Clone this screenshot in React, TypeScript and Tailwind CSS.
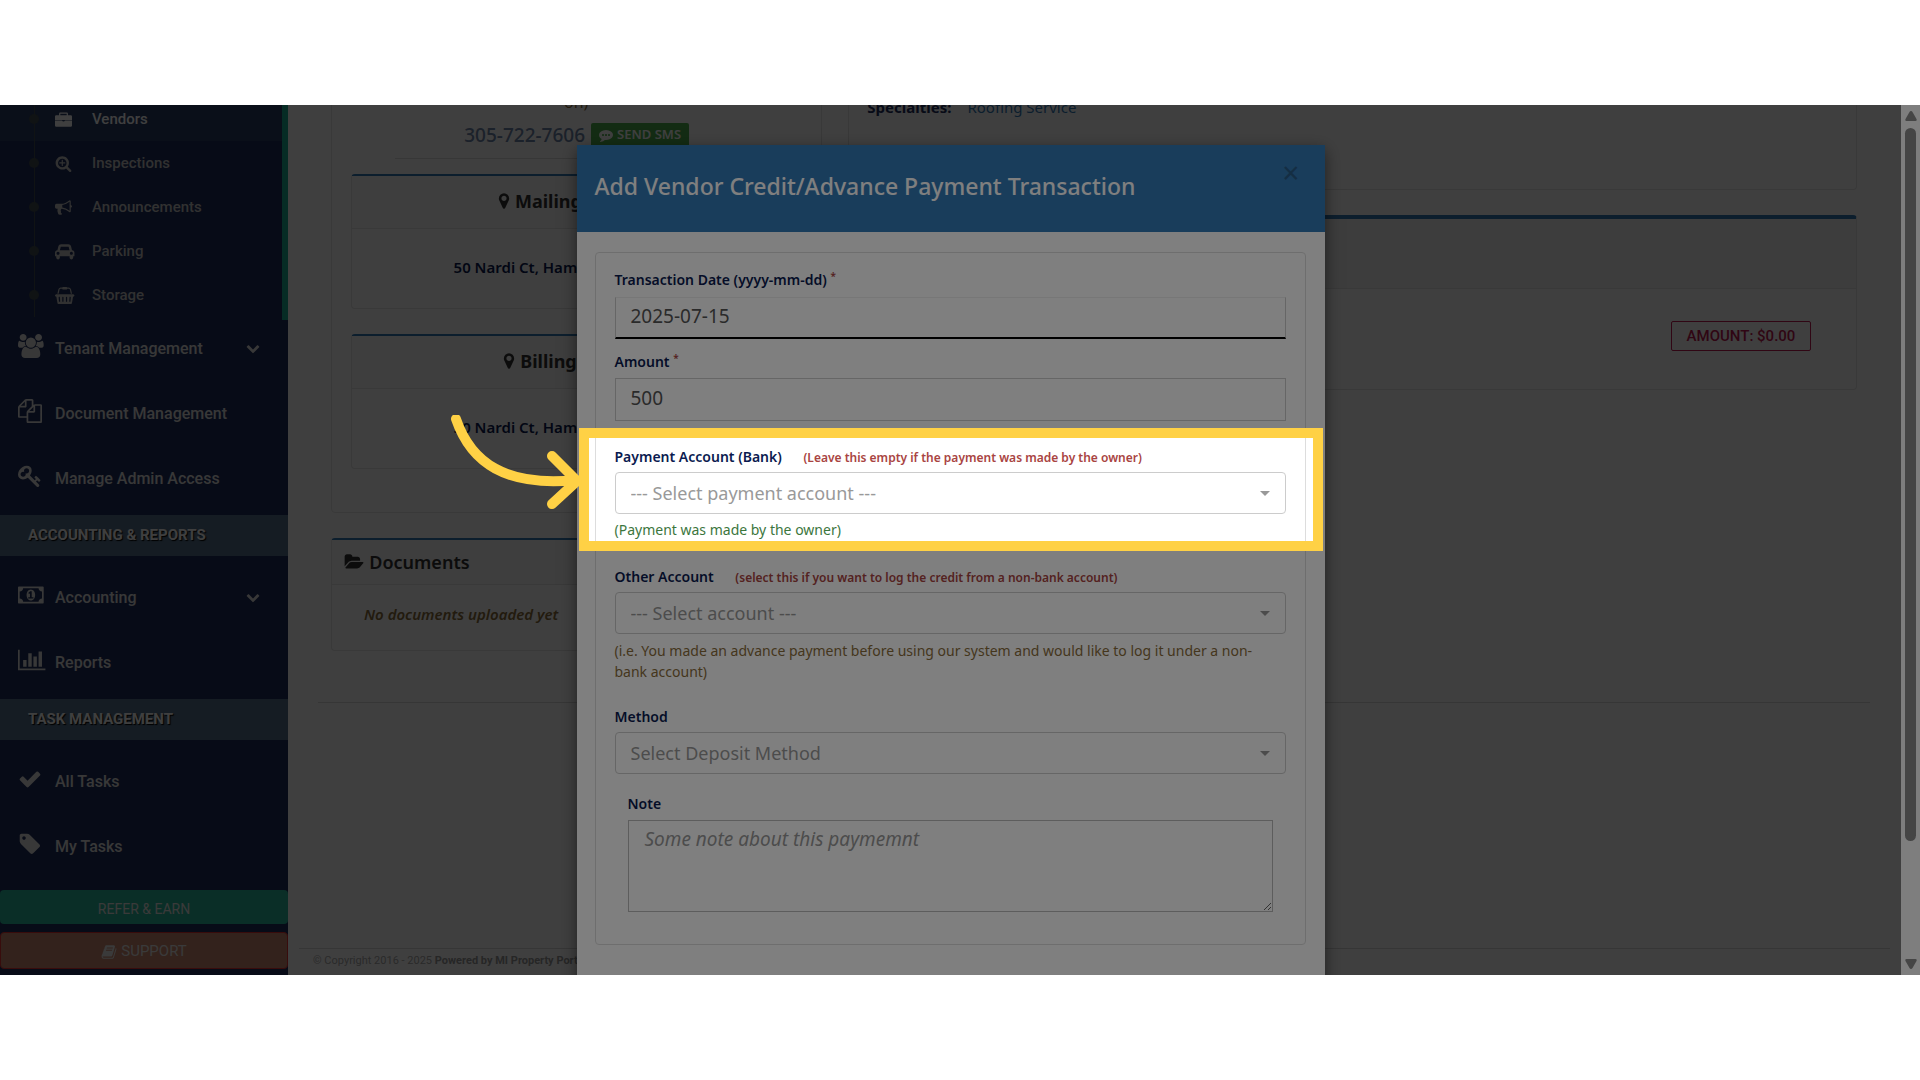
import type { ReactNode } from "react";

type Glyph = { w: number; d: string };

const glyphs = {
  briefcase: {
    w: 1792,
    d: "M0 576q0-128 128-128h304v-192q0-96 96-96h736q96 0 96 96v192h304q128 0 128 128v368h-1792zM560 288v160h672v-160zM0 1010h752q0 96 144 96t144-96h752v526q0 128-128 128h-1536q-128 0-128-128z",
  },
  searchPlus: {
    w: 1792,
    d: "M1088 800v64q0 13-9.5 22.5t-22.5 9.5h-224v224q0 13-9.5 22.5t-22.5 9.5h-64q-13 0-22.5-9.5t-9.5-22.5v-224h-224q-13 0-22.5-9.5t-9.5-22.5v-64q0-13 9.5-22.5t22.5-9.5h224v-224q0-13 9.5-22.5t22.5-9.5h64q13 0 22.5 9.5t9.5 22.5v224h224q13 0 22.5 9.5t9.5 22.5zm128 32q0-185-131.5-316.5t-316.5-131.5-316.5 131.5-131.5 316.5 131.5 316.5 316.5 131.5 316.5-131.5 131.5-316.5zm512 832q0 53-37.5 90.5t-90.5 37.5q-54 0-90-38l-343-342q-179 124-399 124-143 0-273.5-55.5t-225-150-150-225-55.5-273.5 55.5-273.5 150-225 225-150 273.5-55.5 273.5 55.5 225 150 150 225 55.5 273.5q0 220-124 399l343 343q37 37 37 90z",
  },
  bullhorn: {
    w: 1792,
    d: "M1664 640q53 0 90.5 37.5t37.5 90.5-37.5 90.5-90.5 37.5v384q0 52-38 90t-90 38q-417-347-812-380-58 19-91 66t-31 100.5 40 92.5q-20 33-23 65.5t6 58 33.5 55 48 50 61.5 50.5q-29 58-111.5 83t-168.5 11.5-132-55.5q-7-23-29.5-87.5t-32-94.5-23-89-15-101 3.5-98.5 22-110.5h-122q-66 0-113-47t-47-113v-192q0-66 47-113t113-47h480q435 0 896-384 52 0 90 38t38 90v384zm-128 604v-954q-394 302-768 343v270q377 42 768 341z",
  },
  car: {
    w: 2048,
    d: "M480 1088q0-66-47-113t-113-47-113 47-47 113 47 113 113 47 113-47 47-113zm36-320h1016l-89-357q-2-8-14-17.5t-21-9.5h-768q-9 0-21 9.5t-14 17.5zm1372 320q0-66-47-113t-113-47-113 47-47 113 47 113 113 47 113-47 47-113zm160-96v384q0 14-9 23t-23 9h-96v128q0 80-56 136t-136 56-136-56-56-136v-128h-1024v128q0 80-56 136t-136 56-136-56-56-136v-128h-96q-14 0-23-9t-9-23v-384q0-93 65.5-158.5t158.5-65.5h28l105-419q23-94 104-157.5t179-63.5h768q98 0 179 63.5t104 157.5l105 419h28q93 0 158.5 65.5t65.5 158.5z",
  },
  basket: {
    w: 2048,
    d: "M1920 768q53 0 90.5 37.5t37.5 90.5-37.5 90.5-90.5 37.5h-15l-115 662q-8 46-44 76t-82 30h-1280q-46 0-82-30t-44-76l-115-662h-15q-53 0-90.5-37.5t-37.5-90.5 37.5-90.5 90.5-37.5h1792zm-1435 800q26-2 43.5-22.5t15.5-46.5l-32-416q-2-26-22.5-43.5t-46.5-15.5-43.5 22.5-15.5 46.5l32 416q2 25 20.5 42t43.5 17h5zm411-64v-416q0-26-19-45t-45-19-45 19-19 45v416q0 26 19 45t45 19 45-19 19-45zm384 0v-416q0-26-19-45t-45-19-45 19-19 45v416q0 26 19 45t45 19 45-19 19-45zm352 5l32-416q2-26-15.5-46.5t-43.5-22.5-46.5 15.5-22.5 43.5l-32 416q-2 26 15.5 46.5t43.5 22.5h5q25 0 43.5-17t20.5-42zm-1156-1217l-93 412h-132l101-441q19-88 89-143.5t160-55.5h167q0-26 19-45t45-19h384q26 0 45 19t19 45h167q90 0 160 55.5t89 143.5l101 441h-132l-93-412q-11-44-45.5-72t-79.5-28h-167q0 26-19 45t-45 19h-384q-26 0-45-19t-19-45h-167q-45 0-79.5 28t-45.5 72z",
  },
  users: {
    w: 1920,
    d: "M593 896q-162 5-265 128h-134q-82 0-138-40.5t-56-118.5q0-353 124-353 6 0 43.5 21t97.5 42.5 119 21.5q67 0 133-23-5 37-5 66 0 139 81 256zm1071 637q0 120-73 189.5t-194 69.5h-874q-121 0-194-69.5t-73-189.5q0-53 3.5-103.5t14-109 26.5-108.5 43-97.5 62-81 85.5-53.5 111.5-20q10 0 43 21.5t73 48 107 48 135 21.5 135-21.5 107-48 73-48 43-21.5q61 0 111.5 20t85.5 53.5 62 81 43 97.5 26.5 108.5 14 109 3.5 103.5zm-1024-1277q0 106-75 181t-181 75-181-75-75-181 75-181 181-75 181 75 75 181zm704 384q0 159-112.5 271.5t-271.5 112.5-271.5-112.5-112.5-271.5 112.5-271.5 271.5-112.5 271.5 112.5 112.5 271.5zm576 225q0 78-56 118.5t-138 40.5h-134q-103-123-265-128 81-117 81-256 0-29-5-66 66 23 133 23 59 0 119-21.5t97.5-42.5 43.5-21q124 0 124 353zm-128-609q0 106-75 181t-181 75-181-75-75-181 75-181 181-75 181 75 75 181z",
  },
  files: {
    w: 1792,
    d: "M1696 384q40 0 68 28t28 68v1216q0 40-28 68t-68 28h-960q-40 0-68-28t-28-68v-288h-544q-40 0-68-28t-28-68v-672q0-40 20-88t48-76l408-408q28-28 76-48t88-20h416q40 0 68 28t28 68v328q68-40 128-40h416zm-544 213l-299 299h299v-299zm-640-384l-299 299h299v-299zm196 647l316-316v-416h-384v416q0 40-28 68t-68 28h-416v640h512v-256q0-40 20-88t48-76zm956 804v-1152h-384v416q0 40-28 68t-68 28h-416v640h896z",
  },
  key: {
    w: 1792,
    d: "M832 512q0-80-56-136t-136-56-136 56-56 136q0 42 19 83-41-19-83-19-80 0-136 56t-56 136 56 136 136 56 136-56 56-136q0-42-19-83 41 19 83 19 80 0 136-56t56-136zm851 704q0 17-49 66t-66 49q-9 0-28.5-16t-36.5-33-38.5-40-24.5-26l-96 96 220 220q28 28 28 68 0 42-39 81t-81 39q-40 0-68-28l-671-671q-176 131-365 131-163 0-265.5-102.5t-102.5-265.5q0-160 95-313t248-248 313-95q163 0 265.5 102.5t102.5 265.5q0 189-131 365l355 355 96-96q-3-3-26-24.5t-40-38.5-33-36.5-16-28.5q0-17 49-66t66-49q13 0 23 10 6 6 46 44.5t82 79.5 86.5 86 73 78 28.5 41z",
  },
  money: {
    w: 1920,
    d: "M768 1152h384v-96h-128v-448h-114l-148 137 77 80q42-37 55-57h2v288h-128v96zm512-256q0 70-21 142t-59.5 134-101.5 101-138 39-138-39-101.5-101-59.5-134-21-142 21-142 59.5-134 101.5-101 138-39 138 39 101.5 101 59.5 134 21 142zm512 256v-512q-106 0-181-75t-75-181h-1152q0 106-75 181t-181 75v512q106 0 181 75t75 181h1152q0-106 75-181t181-75zm128-832v1152q0 26-19 45t-45 19h-1792q-26 0-45-19t-19-45v-1152q0-26 19-45t45-19h1792q26 0 45 19t19 45z",
  },
  chart: {
    w: 2048,
    d: "M640 896v512h-256v-512h256zm384-512v1024h-256v-1024h256zm1024 1152v128h-2048v-1536h128v1408h1920zm-640-896v768h-256v-768h256zm384-384v1152h-256v-1152h256z",
  },
  check: {
    w: 1792,
    d: "M1671 566q0 40-28 68l-724 724-136 136q-28 28-68 28t-68-28l-136-136-362-362q-28-28-28-68t28-68l136-136q28-28 68-28t68 28l294 295 656-657q28-28 68-28t68 28l136 136q28 28 28 68z",
  },
  tag: {
    w: 1792,
    d: "M576 448q0-53-37.5-90.5t-90.5-37.5-90.5 37.5-37.5 90.5 37.5 90.5 90.5 37.5 90.5-37.5 37.5-90.5zm1067 576q0 53-37 90l-491 492q-39 37-91 37-53 0-90-37l-715-716q-38-37-64.5-101t-26.5-117v-416q0-52 38-90t90-38h416q53 0 117 26.5t102 64.5l715 714q37 39 37 91z",
  },
  book: {
    w: 1792,
    d: "M1703 478q40 57 18 129l-275 906q-19 64-76.5 107.5t-122.5 43.5h-923q-77 0-148.5-53.5t-99.5-131.5q-24-67-2-127 0-4 3-27t4-37q1-8-3-21.5t-3-19.5q2-11 8-21t16.5-23.5 16.5-23.5q23-38 45-91.5t30-91.5q3-10 .5-30t-.5-28q3-11 17-28t17-23q21-36 42-92t25-90q1-9-2.5-32t.5-28q4-13 22-30.5t22-22.5q19-26 42.5-84.5t27.5-96.5q1-8-3-25.5t-2-26.5q2-8 9-18t18-23 17-21q8-12 16.5-30.5t15-35 16-36 19.5-32 26.5-23.5 36-11.5 47.5 5.5l-1 3q38-9 51-9h761q74 0 114 56t18 130l-274 906q-36 119-71.5 153.5t-128.5 34.5h-869q-27 0-38 15-11 16-1 43 24 70 144 70h923q29 0 56-15.5t35-41.5l300-987q7-22 5-57 38 15 59 43zm-1064 2q-4 13 2 22.5t20 9.5h608q13 0 25.5-9.5t16.5-22.5l21-64q4-13-2-22.5t-20-9.5h-608q-13 0-25.5 9.5t-16.5 22.5zm-83 256q-4 13 2 22.5t20 9.5h608q13 0 25.5-9.5t16.5-22.5l21-64q4-13-2-22.5t-20-9.5h-608q-13 0-25.5 9.5t-16.5 22.5z",
  },
  comment: {
    w: 1792,
    d: "M640 896q0-53-37.5-90.5t-90.5-37.5-90.5 37.5-37.5 90.5 37.5 90.5 90.5 37.5 90.5-37.5 37.5-90.5zm384 0q0-53-37.5-90.5t-90.5-37.5-90.5 37.5-37.5 90.5 37.5 90.5 90.5 37.5 90.5-37.5 37.5-90.5zm384 0q0-53-37.5-90.5t-90.5-37.5-90.5 37.5-37.5 90.5 37.5 90.5 90.5 37.5 90.5-37.5 37.5-90.5zm384 0q0 174-120 321.5t-326 233-450 85.5q-70 0-145-8-198 175-460 242-49 14-114 22-17 2-30.5-9t-17.5-29v-1q-3-4-.5-12t2-10 4.5-9.5l6-9 7-8.5 8-9q7-8 31-34.5t34.5-38 31-39.5 32.5-51 27-59 26-76q-157-89-247.5-220t-90.5-281q0-130 71-248.5t191-204.5 286-136.5 348-50.5 348 50.5 286 136.5 191 204.5 71 248.5z",
  },
  marker: {
    w: 1792,
    d: "M1152 640q0-106-75-181t-181-75-181 75-75 181 75 181 181 75 181-75 75-181zm256 0q0 109-33 179l-364 774q-16 33-47.5 52t-67.5 19-67.5-19-46.5-52l-365-774q-33-70-33-179 0-212 150-362t362-150 362 150 150 362z",
  },
  folder: {
    w: 1920,
    d: "M1943 952q0 31-31 66l-336 396q-43 51-120.5 86.5t-143.5 35.5h-1088q-34 0-60.5-13t-26.5-43q0-31 31-66l336-396q43-51 120.5-86.5t143.5-35.5h1088q34 0 60.5 13t26.5 43zm-343-344v160h-832q-94 0-197 47.5t-164 119.5l-337 396-5 6q0-4-.5-12.5t-.5-12.5v-960q0-92 66-158t158-66h320q92 0 158 66t66 158v32h544q92 0 158 66t66 158z",
  },
  chevron: {
    w: 1792,
    d: "M1683 808l-742 741q-19 19-45 19t-45-19l-742-741q-19-19-19-45.5t19-45.5l166-165q19-19 45-19t45 19l531 531 531-531q19-19 45-19t45 19l166 165q19 19 19 45.5t-19 45.5z",
  },
} satisfies Record<string, Glyph>;

type IconName = keyof typeof glyphs;

function Icon({ name, className }: { name: IconName; className: string }) {
  const { w, d } = glyphs[name];
  return (
    <svg viewBox={`0 0 ${w} 1792`} className={`w-auto shrink-0 overflow-visible fill-current ${className}`} aria-hidden="true">
      <path d={d} />
    </svg>
  );
}

const subItems: { label: string; icon: IconName }[] = [
  { label: "Inspections", icon: "searchPlus" },
  { label: "Announcements", icon: "bullhorn" },
  { label: "Parking", icon: "car" },
  { label: "Storage", icon: "basket" },
];

function SubItem({ label, icon, active }: { label: string; icon: IconName; active?: boolean }) {
  return (
    <li>
      <a
        href="#"
        className={`relative flex h-11 items-center text-[15px] font-medium ${active ? "bg-[#283c64] text-white" : "text-[#c4c4c4]"}`}
      >
        <span className="absolute top-0 bottom-0 left-[34px] w-px bg-[#404c50]" />
        <span className="absolute left-[29px] size-[10px] rounded-full bg-[#404c50]" />
        <span className="flex w-[92px] items-center pl-[55px]">
          <Icon name={icon} className="h-[17px]" />
        </span>
        {label}
      </a>
    </li>
  );
}

function MenuItem({ label, icon, expandable }: { label: string; icon: IconName; expandable?: boolean }) {
  return (
    <li>
      <a href="#" className="flex h-[65px] items-center pb-[7px] pl-[18px] text-base font-medium text-[#e0e0e0]">
        <span className="flex w-[37px] items-center pb-1.5">
          <Icon name={icon} className="h-6" />
        </span>
        <span className="flex-1">{label}</span>
        {expandable && <Icon name="chevron" className="mr-7 mb-0.5 h-[14px]" />}
      </a>
    </li>
  );
}

function MenuHeading({ children }: { children: ReactNode }) {
  return (
    <h3 className="mb-[13px] flex h-[41px] items-center bg-[#54708c] pl-7 text-[15px] font-bold text-white [text-shadow:1px_1px_1px_#000]">
      {children}
    </h3>
  );
}

function Sidebar() {
  return (
    <aside className="w-72 shrink-0 bg-[#1c2c5c] font-[Roboto,sans-serif]">
      <nav>
        <ul className="-mt-2 border-r-[6px] border-[#1ab394] pb-[3px]">
          <SubItem label="Vendors" icon="briefcase" active />
          {subItems.map((item) => (
            <SubItem key={item.label} {...item} />
          ))}
        </ul>
        <ul>
          <MenuItem label="Tenant Management" icon="users" expandable />
          <MenuItem label="Document Management" icon="files" />
          <MenuItem label="Manage Admin Access" icon="key" />
        </ul>
        <MenuHeading>ACCOUNTING &amp; REPORTS</MenuHeading>
        <ul>
          <MenuItem label="Accounting" icon="money" expandable />
          <MenuItem label="Reports" icon="chart" />
        </ul>
        <MenuHeading>TASK MANAGEMENT</MenuHeading>
        <ul>
          <MenuItem label="All Tasks" icon="check" />
          <MenuItem label="My Tasks" icon="tag" />
        </ul>
      </nav>
      <div className="flex flex-col gap-2 pt-[7px] text-sm text-[#e8e8e8]">
        <button type="button" className="h-[34px] rounded-sm bg-[#28b89c] pt-1">
          REFER &amp; EARN
        </button>
        <button
          type="button"
          className="flex h-[37px] items-center justify-center gap-1 rounded-sm border border-[#e03030] bg-[#cc8870] pt-0.5 text-[15px]"
        >
          <Icon name="book" className="h-4" />
          SUPPORT
        </button>
      </div>
    </aside>
  );
}

function AddressCard({ title }: { title: string }) {
  return (
    <section className="h-[135px] rounded border border-t-2 border-[#e4e4e4] border-t-[#337ab7] text-center">
      <h2 className="flex h-[53px] items-center justify-center gap-0.5 border-b border-[#e4e4e4] bg-[#f8f8f8] pb-0.5 text-lg font-bold text-[#333]">
        <Icon name="marker" className="h-[18px]" />
        {title}
      </h2>
      <p className="pt-[27px] text-[15px] font-semibold text-[#0b1b50]">50 Nardi Ct, Hamilton, ON, L9A 1B</p>
    </section>
  );
}

function VendorPage() {
  return (
    <main className="flex min-w-0 flex-1 flex-col bg-white">
      <div className="flex pr-[31px] pl-[30px]">
        <div className="w-1/3 px-[13px]">
          <section className="-mt-5 h-[428px] rounded border border-[#e4e4e4] px-[19px]">
            <p className="h-[23px] pl-[213px] text-base leading-8 text-[#8a6d3b]">on)</p>
            <div className="mx-11 flex h-[50px] items-center justify-center border-b border-[#dcdcdc] pt-[3px]">
              <span className="text-[19px] font-medium text-[#6d84a8]">305-722-7606</span>
              <button
                type="button"
                className="ml-1.5 flex h-6 items-center gap-1 rounded-xs bg-[#4eb14e] px-2 text-[13px] font-semibold text-white"
              >
                <Icon name="comment" className="h-[14px]" />
                SEND SMS
              </button>
            </div>
            <div className="mt-[15px] flex flex-col gap-[25px]">
              <AddressCard title="Mailing Address" />
              <AddressCard title="Billing Address" />
            </div>
          </section>
          <section className="mt-[25px] h-[113px] rounded border border-t-2 border-[#e4e4e4] border-t-[#337ab7]">
            <h2 className="flex h-[45px] items-center gap-1.5 border-b border-[#e4e4e4] bg-[#f8f8f8] pl-3 text-lg font-semibold text-[#333]">
              <Icon name="folder" className="h-[18px]" />
              Documents
            </h2>
            <p className="pt-[18px] pl-8 text-[15px] font-semibold text-[#8a6d3b] italic">No documents uploaded yet</p>
          </section>
        </div>
        <div className="w-2/3 px-[13px]">
          <section className="flow-root h-[85px] rounded-b border border-t-0 border-[#e4e4e4] px-[18px]">
            <dl className="-mt-[10px] flex gap-4 text-[15px] leading-6">
              <dt className="font-bold text-[#1c2c5c]">Specialties:</dt>
              <dd className="text-[#337ab7]">Roofing Service</dd>
            </dl>
          </section>
          <section className="mt-[25px] h-[175px] rounded border border-t-4 border-[#e4e4e4] border-t-[#337ab7]">
            <div className="h-[70px] border-b border-[#e4e4e4] bg-[#f4f4f4]" />
            <div className="flex justify-end px-[45px] pt-8 font-[Roboto,sans-serif]">
              <span className="flex h-[30px] w-[140px] items-center justify-center rounded-xs border border-[#c01850] text-[15px] font-medium text-[#c01850]">
                AMOUNT: $0.00
              </span>
            </div>
          </section>
        </div>
      </div>
      <hr className="mt-[51px] mr-[31px] ml-[30px] border-[#d8d8d8]" />
      <footer className="mx-[11px] mt-auto h-[27px] border-t border-[#d8d8d8] pt-1 pl-3.5 font-[Roboto,sans-serif] text-[11px] text-[#aaa]">
        © Copyright 2016 - 2025 <b className="text-[#999]">Powered by MI Property Portal</b>
      </footer>
    </main>
  );
}

function ScrollBar() {
  return (
    <div className="relative z-10 flex w-[19px] shrink-0 flex-col items-center bg-[#fcfcfc] py-1.5 text-[#8b8b8b]">
      <svg viewBox="0 0 12 10" className="h-[10px] w-3 fill-current" aria-hidden="true">
        <path d="M6 0q1 0 1.500 1l4 7q.7 2-1 2h-9q-1.700 0-1-2l4-7Q5 0 6 0z" />
      </svg>
      <div className="mt-[7px] mb-[118px] w-[11px] flex-1 rounded-full bg-[#8b8b8b]" />
      <svg viewBox="0 0 12 10" className="h-[10px] w-3 rotate-180 fill-current" aria-hidden="true">
        <path d="M6 0q1 0 1.500 1l4 7q.7 2-1 2h-9q-1.700 0-1-2l4-7Q5 0 6 0z" />
      </svg>
    </div>
  );
}

function SelectBox({ id, placeholder }: { id: string; placeholder: string }) {
  return (
    <div className="relative">
      <select
        id={id}
        className="block h-[42px] w-full appearance-none rounded-sm border border-[#ccc] bg-white px-[15px] text-lg text-[#999]"
      >
        <option>{placeholder}</option>
      </select>
      <svg viewBox="0 0 10 5" className="pointer-events-none absolute top-[19px] right-4 h-[5px] w-[10px] fill-[#999]" aria-hidden="true">
        <path d="M0 0h10L5 5z" />
      </svg>
    </div>
  );
}

// Dims everything outside its box and points at it with an arrow.
function Spotlight() {
  return (
    <div className="pointer-events-none absolute -top-[19px] -right-[37px] -bottom-[11px] -left-[36px] z-20 border-[10px] border-[#ffd145] shadow-[0_0_0_2000px_rgba(0,0,0,0.5)]">
      <svg
        viewBox="0 0 140 100"
        className="absolute -top-[23px] -left-[145px] h-[100px] w-[140px] fill-none stroke-[#ffd145]"
        strokeWidth="10"
        strokeLinecap="round"
        strokeLinejoin="round"
        aria-hidden="true"
      >
        <path d="M12 4C27 48 62 72 132 65" />
        <path d="M108 41l25 25-25 23" />
      </svg>
    </div>
  );
}

const labelClass = "block text-sm leading-5 font-semibold text-[#0b1b50]";
const hintClass = "ml-[18px] text-xs font-semibold text-[#a94442]";
const inputClass = "block w-full border border-[#ccc] bg-white px-[15px] pb-[3px] text-[19px] text-[#555]";

function CreditModal() {
  return (
    <div role="dialog" aria-labelledby="modal-title" className="w-[748px] bg-white shadow-[0_5px_15px_rgba(0,0,0,0.5)]">
      <header className="flex h-[87px] items-start justify-between bg-[#337ab7] pr-[25px] pl-[18px]">
        <h1 id="modal-title" className="pt-[23px] text-[23px] leading-9 font-medium text-white">
          Add Vendor Credit/Advance Payment Transaction
        </h1>
        <button type="button" aria-label="Close" className="pt-3 text-3xl leading-8 text-[#295c87]">
          ×
        </button>
      </header>
      <form className="pt-5 pr-[19px] pb-12 pl-[18px]">
        <div className="rounded border border-[#ddd] px-[19px] pb-8">
          <div className="pt-[17px]">
            <label htmlFor="date" className={labelClass}>
              Transaction Date (yyyy-mm-dd) <sup className="text-[10px] text-[#a94442]">*</sup>
            </label>
            <input id="date" defaultValue="2025-07-15" className={`${inputClass} mt-[7px] h-[42px] border-t-[#eee] border-b-2 border-b-black`} />
          </div>
          <div className="pt-[13px]">
            <label htmlFor="amount" className={labelClass}>
              Amount <sup className="text-[10px] text-[#a94442]">*</sup>
            </label>
            <input id="amount" defaultValue="500" className={`${inputClass} mt-1.5 h-[43px]`} />
          </div>
          <div className="relative mt-[26px]">
            <Spotlight />
            <label htmlFor="bank" className={labelClass}>
              Payment Account (Bank) <span className={hintClass}>(Leave this empty if the payment was made by the owner)</span>
            </label>
            <div className="mt-[5px]">
              <SelectBox id="bank" placeholder="--- Select payment account ---" />
            </div>
            <p className="mt-[5px] text-sm leading-[21px] text-[#3c763d]">(Payment was made by the owner)</p>
          </div>
          <div className="mt-[27px]">
            <label htmlFor="other" className={labelClass}>
              Other Account <span className={hintClass}>(select this if you want to log the credit from a non-bank account)</span>
            </label>
            <div className="mt-[5px]">
              <SelectBox id="other" placeholder="--- Select account ---" />
            </div>
            <p className="mt-1.5 pr-3 text-sm leading-[21px] text-[#8a6d3b]">
              (i.e. You made an advance payment before using our system and would like to log it under a non-bank account)
            </p>
          </div>
          <div className="mt-[25px]">
            <label htmlFor="method" className={labelClass}>
              Method
            </label>
            <div className="mt-[5px]">
              <SelectBox id="method" placeholder="Select Deposit Method" />
            </div>
          </div>
          <div className="mt-5 px-[13px]">
            <label htmlFor="note" className={labelClass}>
              Note
            </label>
            <textarea
              id="note"
              placeholder="Some note about this paymemnt"
              className="mt-1.5 block h-[92px] w-full resize border border-[#bbb] px-4 py-1 text-[19px] leading-7 italic placeholder:text-[#999]"
            />
          </div>
        </div>
      </form>
    </div>
  );
}

export default function App() {
  return (
    <div className="flex h-screen flex-col bg-white py-[105px] font-['Noto_Sans','Open_Sans',sans-serif]">
      <div className="relative flex min-h-0 flex-1 overflow-hidden">
        <Sidebar />
        <VendorPage />
        <ScrollBar />
        <div className="absolute inset-0 bg-black/50" />
        <div className="absolute inset-0 z-20 flex items-start justify-center pt-10 pr-[19px]">
          <CreditModal />
        </div>
      </div>
    </div>
  );
}
